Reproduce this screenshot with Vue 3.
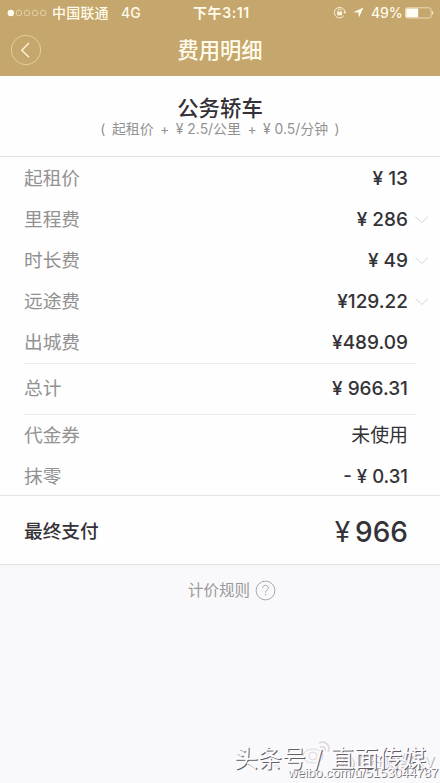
<script setup>
const fares = [
  { label: '起租价', value: '13', spaced: true },
  { label: '里程费', value: '286', spaced: true, more: true },
  { label: '时长费', value: '49', spaced: true, more: true },
  { label: '远途费', value: '129.22', more: true },
  { label: '出城费', value: '489.09' },
]
</script>

<template>
  <main class="screen">
    <header class="top">
      <div class="status">
        <svg class="signal" width="40" height="8" viewBox="0 0 40 8">
          <circle cx="3.8" cy="4" r="3.2" fill="#fffdf0" />
          <circle v-for="i in 4" :key="i" :cx="3.8 + i * 8.1" cy="4" r="2.8" fill="none" stroke="#f1e3bd" stroke-width=".7" />
        </svg>
        <span class="carrier">中国联通</span>
        <span class="network">4G</span>
        <span class="time">下午3:11</span>
        <svg class="lock" width="14" height="13" viewBox="0 0 14 13" fill="none" stroke="#fff6dc">
          <path d="M11.9 6.3A5.3 5.3 0 1 0 11 9.6" stroke-width=".9" />
          <path d="M10.3 5.8h3.2l-1.6 2z" fill="#fff6dc" stroke="none" />
          <path d="M4.1 5.7h5v3.6h-5z" fill="#fff6dc" stroke="none" />
          <path d="M5.1 5.7V4.3a1.5 1.5 0 0 1 3 0v1.4" stroke-width=".8" />
        </svg>
        <svg class="location" width="11" height="11" viewBox="0 0 11 11"><path d="M.4 5.2 10.4.5 6 10.5 5.4 5.5z" fill="#fffdf0" /></svg>
        <span class="percent">49%</span>
        <svg class="battery" width="29" height="12" viewBox="0 0 29 12">
          <rect x=".5" y=".8" width="25.6" height="10.2" rx="1.8" fill="none" stroke="#f5e8c7" stroke-width=".8" />
          <path d="M1.2 1.5h12v8.8h-12z" fill="#fffef4" />
          <path d="M27.2 4c1.5.7 1.5 3.1 0 3.8z" fill="#fff6dc" />
        </svg>
      </div>
      <div class="nav">
        <svg class="back" width="32" height="32" viewBox="0 0 32 32" fill="none">
          <circle cx="16" cy="16" r="14.7" stroke="#e8cf95" stroke-width="1" />
          <path d="m19 9-7.2 7.2L19 23.3" stroke="#fff5d8" stroke-width="1.4" />
        </svg>
        <h1>费用明细</h1>
      </div>
    </header>

    <section class="vehicle">
      <h2>公务轿车</h2>
      <p><span>(</span><span>起租价</span><span>+</span><span>¥ 2.5/公里</span><span>+</span><span>¥ 0.5/分钟</span><span>)</span></p>
    </section>

    <section class="fares">
      <div v-for="row in fares" :key="row.label" class="row">
        <span>{{ row.label }}</span>
        <strong><i :class="{ spaced: row.spaced }">¥</i>{{ row.value }}</strong>
        <svg v-if="row.more" class="chevron" width="16" height="10" viewBox="0 0 16 10" fill="none" stroke="#d5d5d5"><path d="m1.5 1.5 6.3 6 6.3-6" /></svg>
      </div>
    </section>
    <div class="row total"><span>总计</span><strong><i class="spaced">¥</i>966.31</strong></div>
    <section class="discounts">
      <div class="row"><span>代金券</span><strong class="unused">未使用</strong></div>
      <div class="row"><span>抹零</span><strong class="rounding">- <i class="spaced">¥</i>0.31</strong></div>
    </section>
    <section class="row payment"><span>最终支付</span><strong><i>¥</i>966</strong></section>
    <div class="rules"><span>计价规则</span>
      <svg width="21" height="21" viewBox="0 0 21 21" fill="none" stroke="#aaa">
        <circle cx="10.5" cy="10.5" r="9.4" />
        <path d="M7.6 8.2c0-4 6-3.7 5.7-.2-.2 2-2.8 2-2.8 4.5M10.5 14v1.4" />
      </svg>
    </div>
    <div class="watermark">
      <svg class="weibo" width="31" height="27" viewBox="0 0 31 27" fill="none" stroke="#ddd9df">
        <ellipse cx="11" cy="18" rx="10" ry="7" /><circle cx="11" cy="18" r="4" />
        <path d="M17 5c7-3 12 3 9 9M18 9c4-1 6 1 5 4" stroke-width="1.5" />
      </svg>
      <span class="handle">@旺旺财经TV</span>
      <span class="url">weibo.com/u/5153044787</span>
      <span class="source">头条号 / 直面传媒</span>
    </div>
  </main>
</template>

<style>
body { margin: 0; background: #f9f8fb; }
</style>
<style scoped>
* { box-sizing: border-box; }
.screen { position: relative; width: 440px; height: 783px; overflow: hidden; background: #f9f8fb; color: #333236; font-family: Inter, "Noto Sans CJK SC", sans-serif; }
.top { height: 76px; background: #c5a66c; color: #fffbea; }
.status { height: 25px; display: flex; align-items: center; padding-left: 7px; font-size: 14px; font-weight: 500; line-height: 25px; white-space: nowrap; }
.signal { flex: none; }
.carrier { width: 62px; margin-left: 5px; letter-spacing: .2px; }
.network { width: 72px; margin-left: 7px; }
.time { width: 61px; font-weight: 600; letter-spacing: .6px; }
.lock { margin-left: 79px; flex: none; }
.location { margin-left: 6px; flex: none; }
.percent { width: 31px; margin-left: 7px; letter-spacing: -.1px; }
.battery { margin-left: 3px; flex: none; }
.nav { height: 50px; display: grid; grid-template-columns: 60px 1fr 60px; align-items: center; }
.back { margin-left: 10px; }
h1 { margin: 0; text-align: center; font-size: 21.3px; line-height: 48px; font-weight: 500; }
.vehicle { height: 81px; padding-top: 19px; background: #fefefe; border-bottom: 1px solid #e2e2e2; text-align: center; }
h2 { margin: 0; font-size: 21.4px; font-weight: 500; line-height: 27px; }
.vehicle p { display: flex; justify-content: center; gap: 6.5px; margin: 0; color: #929292; font-size: 13.9px; line-height: 15px; white-space: nowrap; }
.fares { height: 207px; padding-top: 1px; background: #fefefe; }
.row { display: flex; align-items: center; height: 41px; padding: 0 32px 0 24px; position: relative; background: #fefefe; line-height: 28px; }
.row > span { font-size: 18.7px; color: #929292; font-weight: 400; }
.row > strong { margin-left: auto; font-size: 19px; font-weight: 500; white-space: pre; }
i { font-style: normal; }
.spaced { margin-right: 5px; }
.chevron { position: absolute; left: 414px; top: 16px; }
.row.total { height: 51px; padding-bottom: 1px; }
.row > .rounding { font-size: 18.5px; line-height: 26px; margin-top: -1px; }
.total::before, .total::after { content: ''; position: absolute; left: 24px; right: 24px; height: 1px; background: #ececec; }
.total::before { top: -1px; }
.total::after { bottom: 0; }
.discounts { height: 80px; background: #fefefe; }
.row > .unused { font-size: 18.9px; font-weight: 400; }
.row.payment { height: 70px; padding-top: 3px; border-top: 1px solid #e5e5e7; border-bottom: 1px solid #e1e1e5; }
.row.payment > span { color: #333236; font-weight: 500; }
.row.payment > strong { font-size: 28px; }
.payment i { font-weight: 400; margin-right: 5px; }
.rules { display: flex; align-items: center; justify-content: center; gap: 5px; margin-top: 13px; padding-left: 24px; width: 440px; height: 26px; color: #999; font-size: 15.5px; line-height: 24px; }
.rules svg { margin-top: -1px; }
.watermark { position: absolute; left: 230px; top: 735px; width: 210px; height: 48px; white-space: nowrap; }
.watermark > * { position: absolute; }
.weibo { left: 72px; top: 3px; }
.handle { left: 110px; top: 16px; font-size: 15px; line-height: 22px; color: #faf9fc; text-shadow: 1px 1px 0 #b5b3b9; }
.url { left: 58px; top: 29px; font: 13.3px/18px "Liberation Sans", sans-serif; letter-spacing: -.1px; color: #faf9fc; text-shadow: 1px 1px 0 #777579; }
.source { left: 4px; top: 9px; font-size: 24px; line-height: 30px; word-spacing: 1px; color: #fdfbff; text-shadow: 1px 1px 0 #626064; }
</style>
